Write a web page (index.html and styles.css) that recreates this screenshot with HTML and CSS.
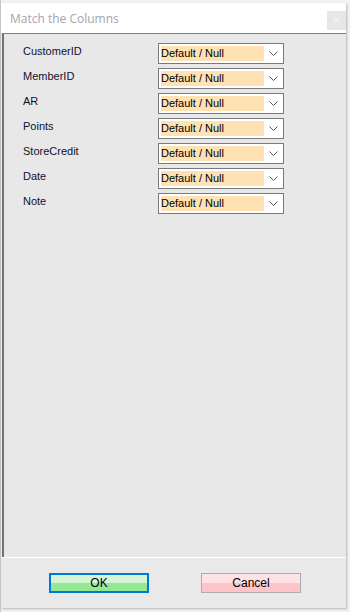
FILE: index.html
```html
<!DOCTYPE html>
<html lang="en">
<head>
    <meta charset="UTF-8">
    <title>Match the Columns</title>
    <link rel="stylesheet" href="styles.css">
</head>
<body>
<div class="backdrop">
    <div class="dialog">
        <div class="titlebar">
            <span class="title">Match the Columns</span>
            <span class="close">&#215;</span>
        </div>
        <div class="panel">
            <div class="row">
                <div class="label">CustomerID</div>
                <div class="combo"><span class="value">Default / Null</span><span class="arrow"><svg width="9" height="5" viewBox="0 0 9 5"><polyline points="0.5,0.5 4.5,4.5 8.5,0.5"/></svg></span></div>
            </div>
            <div class="row">
                <div class="label">MemberID</div>
                <div class="combo"><span class="value">Default / Null</span><span class="arrow"><svg width="9" height="5" viewBox="0 0 9 5"><polyline points="0.5,0.5 4.5,4.5 8.5,0.5"/></svg></span></div>
            </div>
            <div class="row">
                <div class="label">AR</div>
                <div class="combo"><span class="value">Default / Null</span><span class="arrow"><svg width="9" height="5" viewBox="0 0 9 5"><polyline points="0.5,0.5 4.5,4.5 8.5,0.5"/></svg></span></div>
            </div>
            <div class="row">
                <div class="label">Points</div>
                <div class="combo"><span class="value">Default / Null</span><span class="arrow"><svg width="9" height="5" viewBox="0 0 9 5"><polyline points="0.5,0.5 4.5,4.5 8.5,0.5"/></svg></span></div>
            </div>
            <div class="row">
                <div class="label">StoreCredit</div>
                <div class="combo"><span class="value">Default / Null</span><span class="arrow"><svg width="9" height="5" viewBox="0 0 9 5"><polyline points="0.5,0.5 4.5,4.5 8.5,0.5"/></svg></span></div>
            </div>
            <div class="row">
                <div class="label">Date</div>
                <div class="combo"><span class="value">Default / Null</span><span class="arrow"><svg width="9" height="5" viewBox="0 0 9 5"><polyline points="0.5,0.5 4.5,4.5 8.5,0.5"/></svg></span></div>
            </div>
            <div class="row">
                <div class="label">Note</div>
                <div class="combo"><span class="value">Default / Null</span><span class="arrow"><svg width="9" height="5" viewBox="0 0 9 5"><polyline points="0.5,0.5 4.5,4.5 8.5,0.5"/></svg></span></div>
            </div>
        </div>
        <div class="footer">
            <button class="btn btn-ok">OK</button>
            <button class="btn btn-cancel">Cancel</button>
        </div>
    </div>
</div>
</body>
</html>
```

FILE: styles.css
```css
* {
    margin: 0;
    padding: 0;
    box-sizing: border-box;
}

body {
    background: #dcdcdc;
    font-family: "Liberation Sans", Arial, sans-serif;
    font-size: 11px;
    color: #000;
}

.backdrop {
    width: 350px;
    height: 612px;
    padding: 3px 0 0 1px;
    background: linear-gradient(to right, #c8c8c8 0, #c8c8c8 1px, #f2f2f2 1px);
}

.dialog {
    width: 345px;
    height: 605px;
    background: #e9e9e9;
    display: flex;
    flex-direction: column;
    box-shadow: 1px 1px 2px rgba(0, 0, 0, 0.25);
}

.titlebar {
    height: 30px;
    background: #ffffff;
    display: flex;
    align-items: center;
    justify-content: space-between;
    padding: 0 0 0 9px;
}

.title {
    font-family: "Open Sans", "Noto Sans", sans-serif;
    font-size: 12px;
    color: #a4a4b0;
}

.close {
    width: 19px;
    height: 19px;
    margin-top: 4px;
    background: #e6e6e6;
    color: #f6f6f6;
    font-size: 13px;
    line-height: 19px;
    text-align: center;
}

.panel {
    height: 524px;
    margin-left: 1px;
    border-top: 1px solid #7f7f7f;
    border-left: 2px solid #727272;
    background: #e8e8e8;
    padding: 9px 0 0 19px;
    display: flex;
    flex-direction: column;
    gap: 4px;
}

.row {
    display: flex;
    height: 21px;
}

.label {
    width: 135px;
    color: #101030;
    padding-top: 2px;
}

.combo {
    width: 126px;
    height: 21px;
    border: 1px solid #7a7a7a;
    background: #ffffff;
    padding: 2px;
    display: flex;
    align-items: center;
}

.value {
    width: 103px;
    height: 15px;
    line-height: 15px;
    background: #ffe2b4;
    color: #000;
}

.arrow {
    flex: 1;
    display: flex;
    justify-content: center;
    align-items: center;
    padding-left: 2px;
}

.arrow svg {
    fill: none;
    stroke: #555555;
    stroke-width: 1;
}

.footer {
    flex: 1;
    border-top: 1px solid #ffffff;
    display: flex;
    padding: 15px 0 0 48px;
    gap: 52px;
}

.btn {
    width: 100px;
    height: 20px;
    font-family: "Liberation Sans", Arial, sans-serif;
    font-size: 12px;
    color: #000;
    line-height: 16px;
}

.btn-ok {
    border: 2px solid #0078d7;
    background: linear-gradient(to bottom, #d6f5d6 0, #d6f5d6 50%, #94ea94 50%);
}

.btn-cancel {
    border: 1px solid #adadad;
    background: linear-gradient(to bottom, #ffe2e6 0, #ffe2e6 50%, #ffc4c8 50%);
}
```
